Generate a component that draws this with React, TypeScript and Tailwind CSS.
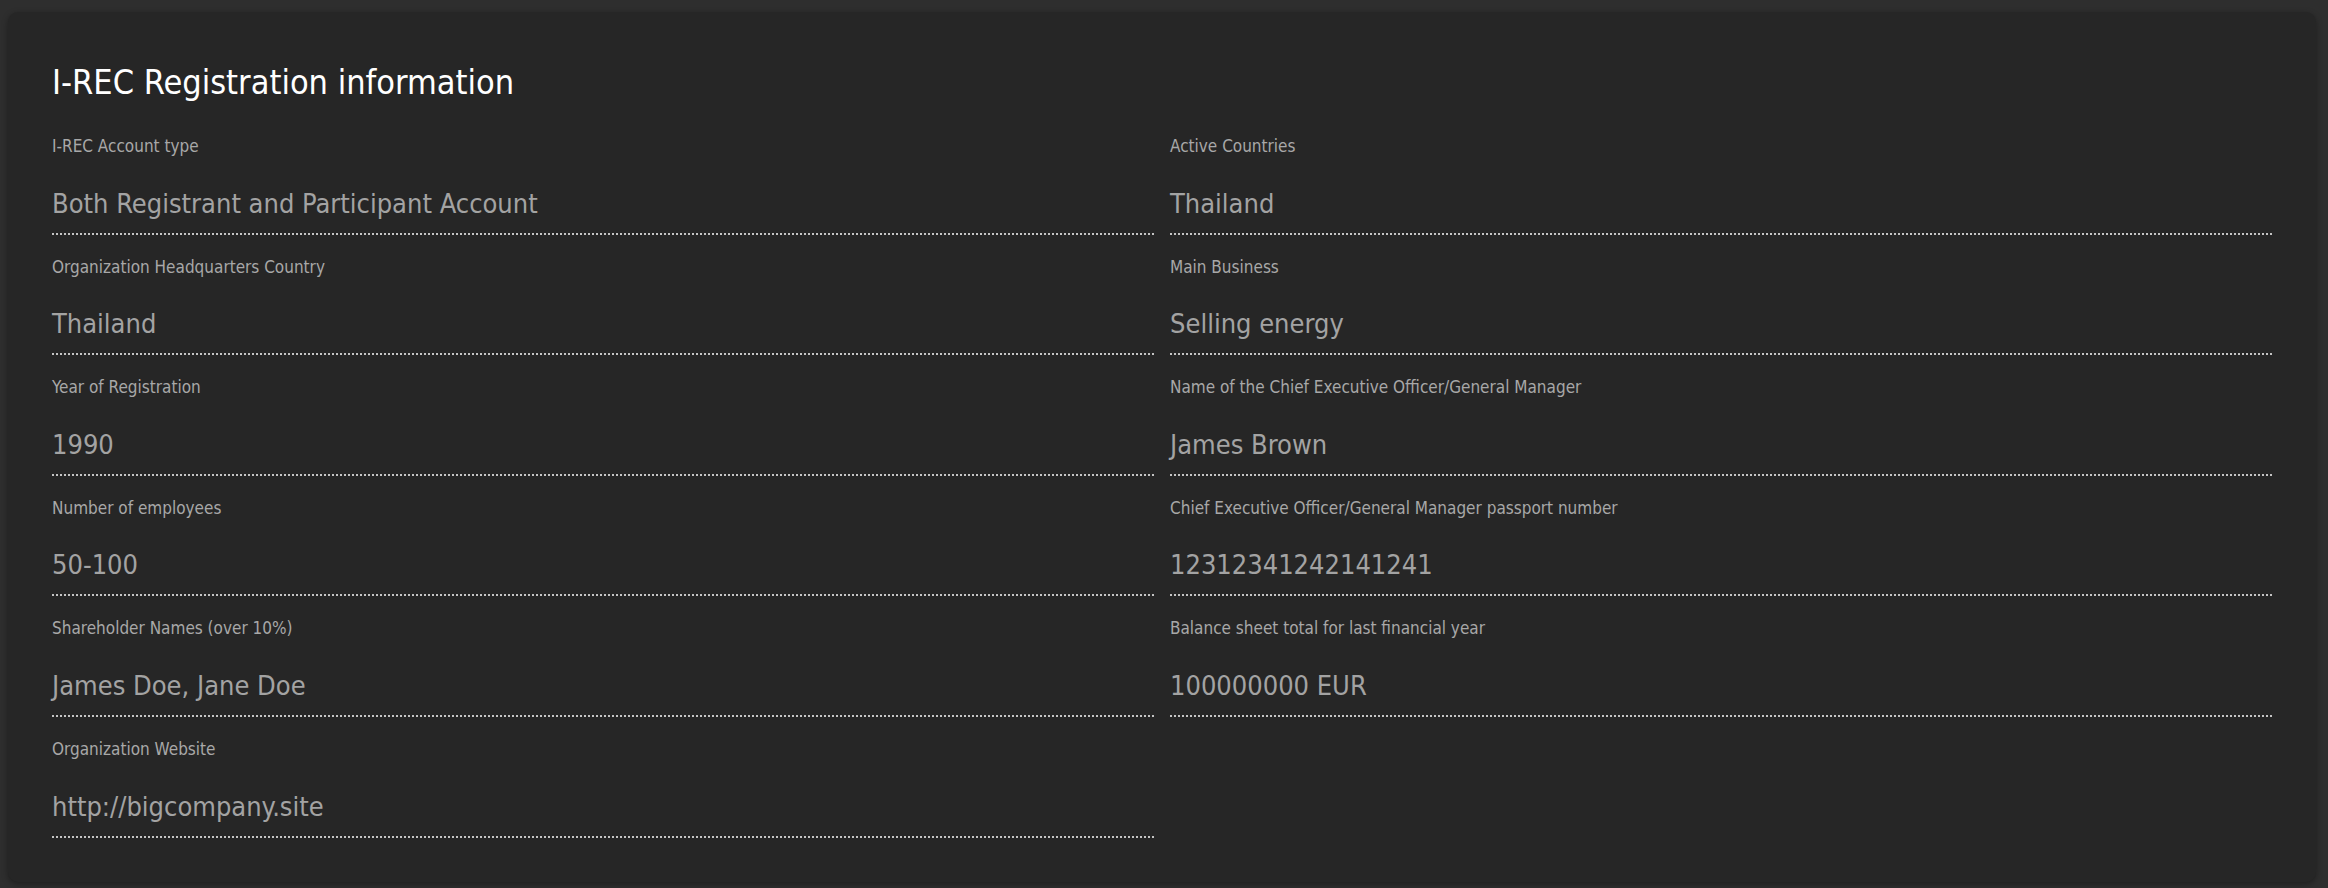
const fields: [string, string][] = [
  ["I-REC Account type", "Both Registrant and Participant Account"],
  ["Active Countries", "Thailand"],
  ["Organization Headquarters Country", "Thailand"],
  ["Main Business", "Selling energy"],
  ["Year of Registration", "1990"],
  ["Name of the Chief Executive Officer/General Manager", "James Brown"],
  ["Number of employees", "50-100"],
  ["Chief Executive Officer/General Manager passport number", "12312341242141241"],
  ["Shareholder Names (over 10%)", "James Doe, Jane Doe"],
  ["Balance sheet total for last financial year", "100000000 EUR"],
  ["Organization Website", "http://bigcompany.site"],
];

const Field = ({ label, value }: { label: string; value: string }) => (
  <div className="flex flex-col pt-5 pb-[9px] border-b-2 border-dotted border-[#c4c4c4]">
    <span className="text-[17px] leading-6 text-[#a8a8a8]">{label}</span>
    <span className="mt-[25.6px] text-[27px] leading-10 text-[#a3a3a3]">{value}</span>
  </div>
);

const App = () => {
  return (
    <div
      className="w-[2328px] h-[888px] bg-[#2e2e2e] pt-3 pl-2 pr-3"
      style={{ fontFamily: '"Liberation Sans Narrow", "DejaVu Sans Condensed", Roboto, sans-serif' }}
    >
      <div className="bg-[#262626] rounded-[10px] shadow-[0_2px_6px_rgba(0,0,0,0.35)] px-11 pt-[48px] pb-[44px]">
        <h2 className="text-[34px] leading-[44px] text-white">I-REC Registration information</h2>
        <div className="grid grid-cols-2 gap-x-4 mt-[10px]">
          {fields.map(([l, v]) => (
            <Field key={l} label={l} value={v} />
          ))}
        </div>
      </div>
    </div>
  );
};

export default App;
